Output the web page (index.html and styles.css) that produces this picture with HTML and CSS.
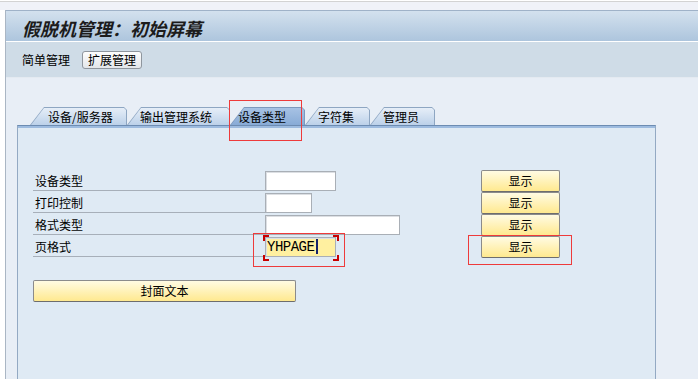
FILE: index.html
```html
<!DOCTYPE html>
<html>
  <head>
    <title>假脱机管理：初始屏幕</title>
    <meta charset="utf-8">
    <link rel="stylesheet" href="styles.css">
  </head>
  <body>
    <div class="topstrip"></div>
    <div class="frame">
      <!-- (A) TITLE + TOOLBAR -->
      <header class="titlebar"><h1>假脱机管理：初始屏幕</h1></header>
      <nav class="toolbar">
        <span>简单管理</span>
        <button class="tool-btn">扩展管理</button>
      </nav>

      <!-- (B) TABS -->
      <main class="page">
        <div class="tabs">
          <div class="tab"><span>设备/服务器</span></div>
          <div class="tab"><span>输出管理系统</span></div>
          <div class="tab active"><span>设备类型</span></div>
          <div class="tab"><span>字符集</span></div>
          <div class="tab"><span>管理员</span></div>
          <i class="mark mark-tab"></i>
        </div>

        <!-- (C) PANEL -->
        <section class="panel">
          <div class="form">
            <label class="lbl">设备类型</label>
            <div class="field"><input class="in w71" type="text"></div>
            <div class="act"><button class="btn">显示</button></div>

            <label class="lbl">打印控制</label>
            <div class="field"><input class="in w47" type="text"></div>
            <div class="act"><button class="btn">显示</button></div>

            <label class="lbl">格式类型</label>
            <div class="field"><input class="in w135" type="text"></div>
            <div class="act"><button class="btn">显示</button></div>

            <label class="lbl">页格式</label>
            <div class="field">
              <div class="in w71 focus">YHPAGE<span class="caret"></span></div>
              <i class="brackets"></i>
              <i class="mark mark-field"></i>
            </div>
            <div class="act">
              <button class="btn">显示</button>
              <i class="mark mark-btn"></i>
            </div>
          </div>
          <button class="btn wide">封面文本</button>
        </section>
      </main>
    </div>
  </body>
</html>
```

FILE: styles.css
```css
* {
  box-sizing: border-box;
}
body {
  margin: 0;
  height: 379px;
  overflow: hidden;
  background: #fff;
  color: #000;
  font-family: "Noto Sans CJK SC", sans-serif;
  font-size: 12px;
}

/* (A) TITLE + TOOLBAR */
.topstrip {
  margin-top: 1px;
  height: 9px;
  border-top: 1px solid #d3d3d3;
  background: #f0f2f8;
}
.frame {
  margin-left: 5px;
  height: 369px;
  border-left: 1px solid #aab6c4;
  display: flex;
  flex-direction: column;
}
.titlebar {
  flex: none;
  height: 31px;
  padding-left: 16px;
  border-top: 1px solid #9fb2c8;
  background: linear-gradient(#d3e1ee, #adc5dd);
  display: flex;
  align-items: center;
}
h1 {
  margin: 0;
  padding-top: 3px;
  font-size: 18px;
  font-weight: bold;
  font-style: italic;
  line-height: 1;
  color: #1c1c1c;
}
.toolbar {
  flex: none;
  height: 37px;
  padding: 0 0 0 16px;
  border-top: 1px solid #fff;
  border-bottom: 1px solid #e4eaf1;
  background: #cfdce7;
  display: flex;
  align-items: center;
  gap: 12px;
}
.tool-btn {
  height: 18px;
  padding: 0 5px;
  font: inherit;
  line-height: 16px;
  border: 1px solid #8f969e;
  border-radius: 3px;
  background: linear-gradient(#fdfdfd, #e3e6ea);
}

/* (B) TABS */
.page {
  flex: 1;
  min-height: 0;
  overflow: hidden;
  padding: 29px 0 0 11px;
  background: #e8eef6;
}
.tabs {
  position: relative;
  display: flex;
  height: 18px;
  margin-left: 13px;
}
.tab {
  height: 18px;
  padding: 1px 1px 0 1px;
  background: #8ea6c2;
  clip-path: polygon(14px 0, calc(100% - 3px) 0, 100% 3px, 100% 100%, 0 100%);
}
.tab span {
  display: block;
  height: 17px;
  padding-left: 12px;
  line-height: 18px;
  white-space: nowrap;
  background: linear-gradient(#e6eef8, #bcd1e9);
  clip-path: polygon(13px 0, calc(100% - 2px) 0, 100% 2px, 100% 100%, 0 100%);
}
.tab:nth-child(1) { width: 97px; }
.tab:nth-child(1) span { padding-left: 17px; }
.tab:nth-child(2) { width: 103px; }
.tab:nth-child(3) { width: 75px; }
.tab:nth-child(4) { width: 65px; }
.tab:nth-child(5) { width: 65px; }
.tab.active { background: #7d99bd; }
.tab.active span {
  padding-left: 7px;
  background: linear-gradient(#a7c2e4, #88abd6);
}

/* red annotation boxes */
.mark {
  position: absolute;
  border: 1px solid #ee3b3b;
  pointer-events: none;
}
.mark-tab { left: 199px; top: -7px; width: 73px; height: 41px; }
.mark-field { left: -12px; top: -2px; width: 92px; height: 34px; }
.mark-btn { left: -13px; top: 0; width: 104px; height: 30px; }

/* (C) PANEL */
.panel {
  width: 639px;
  height: 260px;
  padding: 43px 0 0 15px;
  border: 1px solid #93a9c3;
  border-top-color: #6d8cb2;
  border-bottom: 0;
  background: #dfeaf4;
  box-shadow: inset 0 2px 0 #9dbbdf;
}
.form {
  display: grid;
  grid-template-columns: 232px 216px 79px;
  grid-auto-rows: 22px;
}
.lbl {
  padding: 4px 0 0 2px;
  line-height: 16px;
  border-bottom: 1px solid #a7afb9;
}
.field {
  position: relative;
  padding-top: 2px;
}
.in {
  display: block;
  height: 20px;
  padding: 0 1px;
  border: 1px solid #a9afb6;
  background: #fff;
  box-shadow: inset 1px 1px 0 #dcdfe3;
  font: 14px "Liberation Mono", monospace;
  letter-spacing: -0.5px;
  line-height: 18px;
}
.w71 { width: 71px; }
.w47 { width: 47px; }
.w135 { width: 135px; }
.in.focus { background: #fff0a0; }
.caret {
  display: inline-block;
  width: 2px;
  height: 15px;
  margin-left: 2px;
  vertical-align: -3px;
  background: #15236b;
}
.brackets {
  position: absolute;
  left: -2px;
  top: 0;
  width: 76px;
  height: 26px;
  background:
    linear-gradient(#c80000, #c80000) 0 0 / 6px 2px no-repeat,
    linear-gradient(#c80000, #c80000) 0 0 / 2px 6px no-repeat,
    linear-gradient(#c80000, #c80000) 100% 0 / 6px 2px no-repeat,
    linear-gradient(#c80000, #c80000) 100% 0 / 2px 6px no-repeat,
    linear-gradient(#c80000, #c80000) 0 100% / 6px 2px no-repeat,
    linear-gradient(#c80000, #c80000) 0 100% / 2px 6px no-repeat,
    linear-gradient(#c80000, #c80000) 100% 100% / 6px 2px no-repeat,
    linear-gradient(#c80000, #c80000) 100% 100% / 2px 6px no-repeat;
}
.act {
  position: relative;
  padding-top: 1px;
}
.btn {
  display: block;
  width: 79px;
  height: 22px;
  padding: 0;
  font: inherit;
  line-height: 20px;
  text-align: center;
  border: 1px solid #8b8b8b;
  border-bottom-color: #6d6d6d;
  border-radius: 2px;
  background: linear-gradient(#fffbe3, #ffe98f);
}
.wide {
  width: 263px;
  margin-top: 23px;
}
```
